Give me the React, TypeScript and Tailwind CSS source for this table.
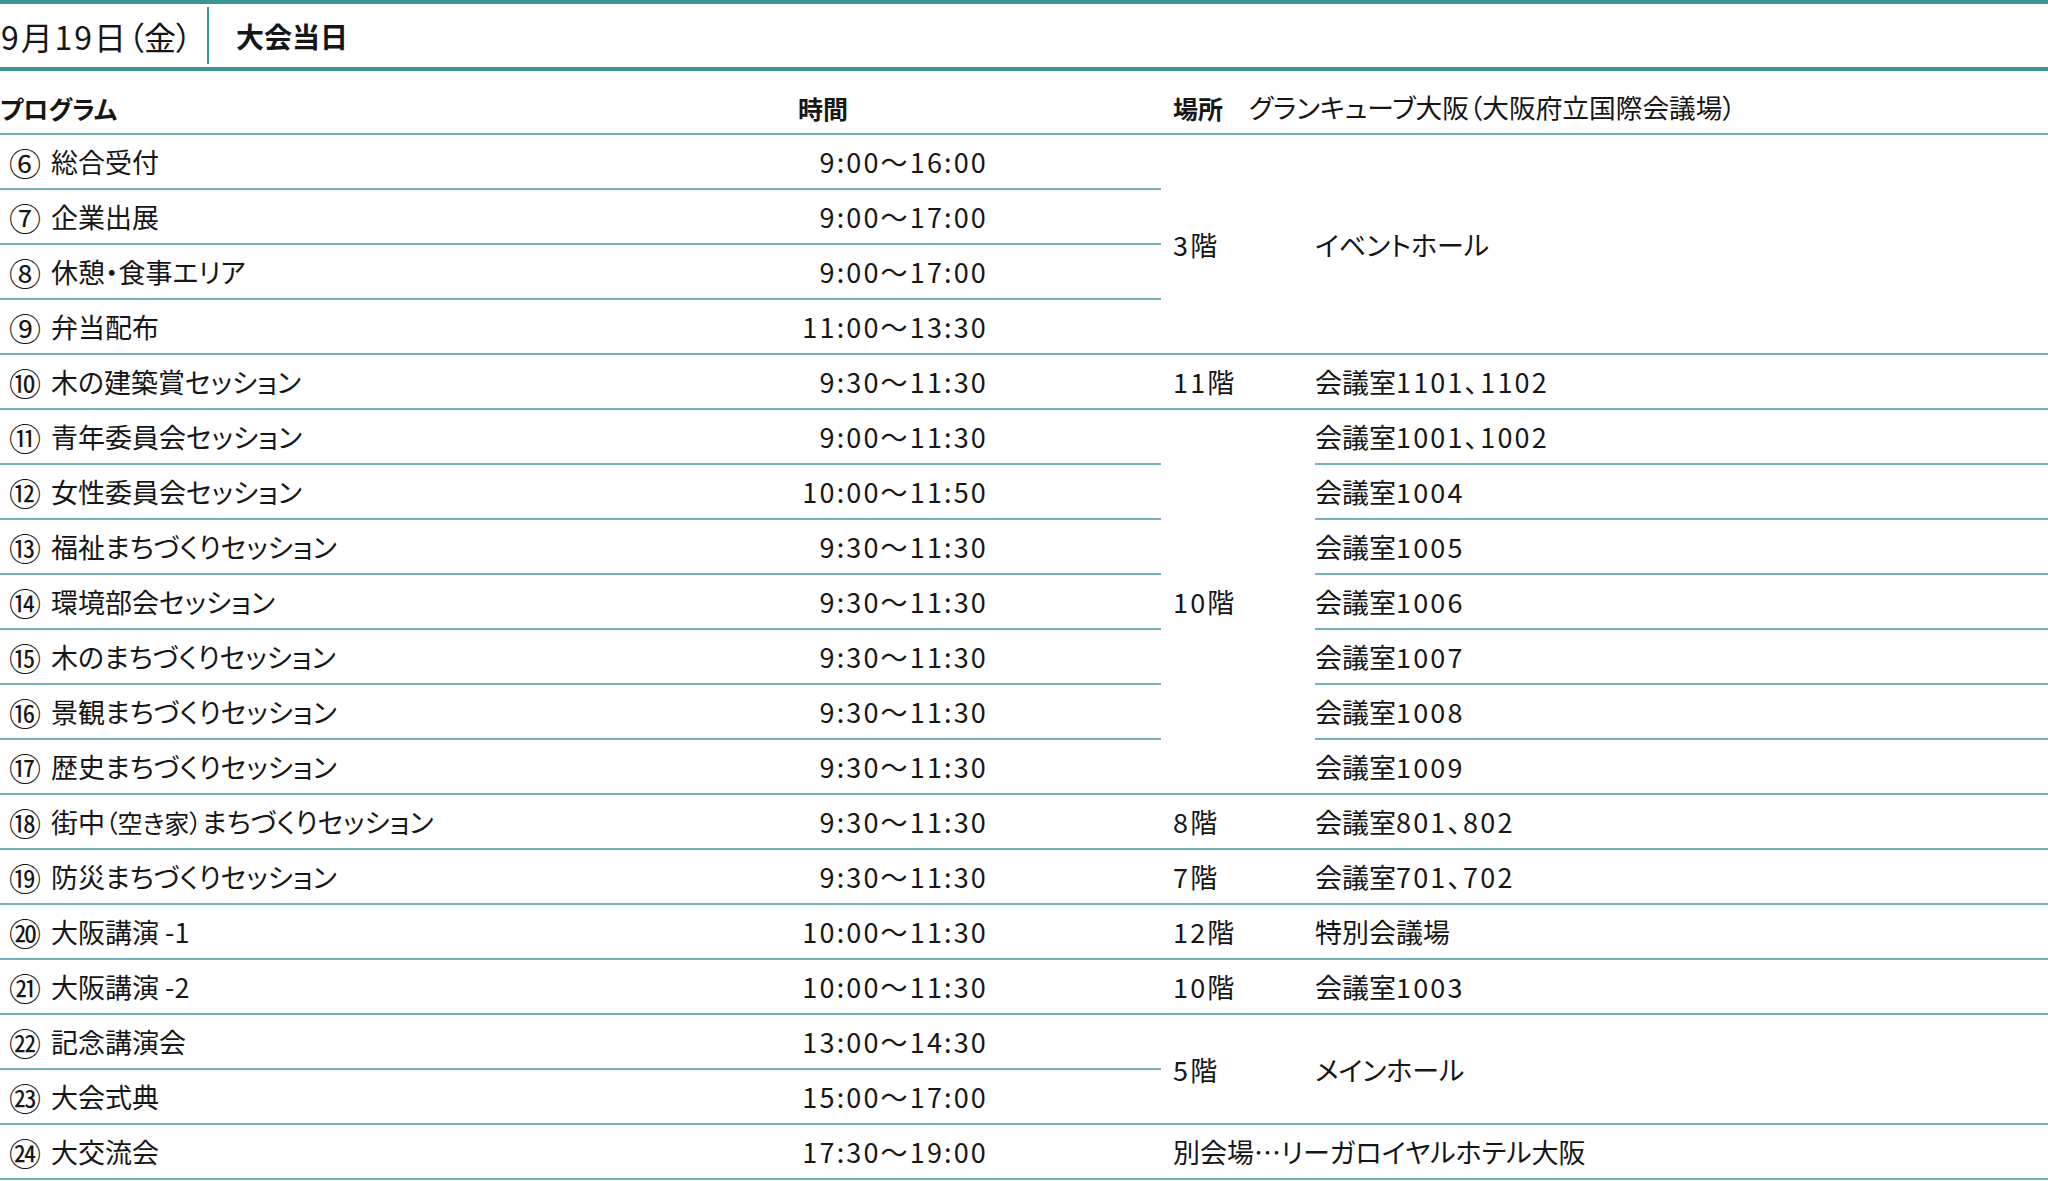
import React from 'react';

type Prog = { n: string; name: React.ReactNode; time: string };

const programs: Prog[] = [
  { n: '⑥', name: '総合受付', time: '9:00〜16:00' },
  { n: '⑦', name: '企業出展', time: '9:00〜17:00' },
  { n: '⑧', name: '休憩・食事エリア', time: '9:00〜17:00' },
  { n: '⑨', name: '弁当配布', time: '11:00〜13:30' },
  { n: '⑩', name: '木の建築賞セッション', time: '9:30〜11:30' },
  { n: '⑪', name: '青年委員会セッション', time: '9:00〜11:30' },
  { n: '⑫', name: '女性委員会セッション', time: '10:00〜11:50' },
  { n: '⑬', name: '福祉まちづくりセッション', time: '9:30〜11:30' },
  { n: '⑭', name: '環境部会セッション', time: '9:30〜11:30' },
  { n: '⑮', name: '木のまちづくりセッション', time: '9:30〜11:30' },
  { n: '⑯', name: '景観まちづくりセッション', time: '9:30〜11:30' },
  { n: '⑰', name: '歴史まちづくりセッション', time: '9:30〜11:30' },
  {
    n: '⑱',
    name: (
      <>
        街中<span className="text-[25px]">（空き家）</span>まちづくりセッション
      </>
    ),
    time: '9:30〜11:30',
  },
  { n: '⑲', name: '防災まちづくりセッション', time: '9:30〜11:30' },
  { n: '⑳', name: '大阪講演 -1', time: '10:00〜11:30' },
  { n: '㉑', name: '大阪講演 -2', time: '10:00〜11:30' },
  { n: '㉒', name: '記念講演会', time: '13:00〜14:30' },
  { n: '㉓', name: '大会式典', time: '15:00〜17:00' },
  { n: '㉔', name: '大交流会', time: '17:30〜19:00' },
];

const line = 'border-b-2 border-[#74b3b9]';

function Num({ children }: { children: React.ReactNode }) {
  return <span className="tracking-[0.08em]">{children}</span>;
}

function Floor({ num, span }: { num: string; span?: string }) {
  return (
    <div className={`${line} ${span ?? ''} col-start-3 flex items-center pl-[12px]`}>
      <Num>{num}</Num>階
    </div>
  );
}

function Room({ children, span }: { children: React.ReactNode; span?: string }) {
  return <div className={`${line} ${span ?? ''} col-start-4 flex items-center`}>{children}</div>;
}

function Kaigi({ no }: { no: string }) {
  return (
    <>
      会議室<Num>{no}</Num>
    </>
  );
}

function locationFor(i: number): React.ReactNode {
  switch (i) {
    case 0:
      return (
        <>
          <Floor num="3" span="row-span-4" />
          <Room span="row-span-4">イベントホール</Room>
        </>
      );
    case 4:
      return (
        <>
          <Floor num="11" />
          <Room>
            <Kaigi no="1101、1102" />
          </Room>
        </>
      );
    case 5:
      return (
        <>
          <Floor num="10" span="row-span-7" />
          <Room>
            <Kaigi no="1001、1002" />
          </Room>
        </>
      );
    case 6:
      return (
        <Room>
          <Kaigi no="1004" />
        </Room>
      );
    case 7:
      return (
        <Room>
          <Kaigi no="1005" />
        </Room>
      );
    case 8:
      return (
        <Room>
          <Kaigi no="1006" />
        </Room>
      );
    case 9:
      return (
        <Room>
          <Kaigi no="1007" />
        </Room>
      );
    case 10:
      return (
        <Room>
          <Kaigi no="1008" />
        </Room>
      );
    case 11:
      return (
        <Room>
          <Kaigi no="1009" />
        </Room>
      );
    case 12:
      return (
        <>
          <Floor num="8" />
          <Room>
            <Kaigi no="801、802" />
          </Room>
        </>
      );
    case 13:
      return (
        <>
          <Floor num="7" />
          <Room>
            <Kaigi no="701、702" />
          </Room>
        </>
      );
    case 14:
      return (
        <>
          <Floor num="12" />
          <Room>特別会議場</Room>
        </>
      );
    case 15:
      return (
        <>
          <Floor num="10" />
          <Room>
            <Kaigi no="1003" />
          </Room>
        </>
      );
    case 16:
      return (
        <>
          <Floor num="5" span="row-span-2" />
          <Room span="row-span-2">メインホール</Room>
        </>
      );
    case 18:
      return (
        <div className={`${line} col-start-3 col-span-2 flex items-center pl-[12px]`}>
          別会場…リーガロイヤルホテル大阪
        </div>
      );
    default:
      return null;
  }
}

export default function App() {
  return (
    <div className="w-[2048px] bg-white text-[#161616] font-['Noto_Sans_CJK_JP','Noto_Sans',sans-serif] [font-feature-settings:'palt'] leading-none">
      {/* Title bar */}
      <div className="h-[71px] border-t-4 border-b-4 border-[#3a9597] flex items-stretch">
        <div className="w-[207px] flex items-center text-[32px] tracking-[0.06em] pl-[1px]">
          9月19日<span className="tracking-normal">（金）</span>
        </div>
        <div className="w-[2px] my-[3px] bg-[#3a9597]" />
        <div className="flex items-center pl-[27px] text-[28px] font-bold">大会当日</div>
      </div>

      {/* Column header */}
      <div className={`grid grid-cols-[798px_363px_154px_1fr] h-[64px] ${line} text-[25px]`}>
        <div className="flex items-end pb-[12px] font-bold">プログラム</div>
        <div className="flex items-end pb-[12px] font-bold">時間</div>
        <div className="col-span-2 flex items-end pb-[12px] pl-[12px]">
          <span className="font-bold">場所</span>
          <span className="ml-[26px] text-[26.7px]">グランキューブ大阪（大阪府立国際会議場）</span>
        </div>
      </div>

      {/* Rows */}
      <div className="grid grid-cols-[798px_363px_154px_1fr] auto-rows-[55px] text-[27px]">
        {programs.map((p, i) => (
          <React.Fragment key={i}>
            <div className={`${line} col-start-1 flex items-center`}>
              <span className="w-[51px] pl-[9px] text-[32px] leading-none">{p.n}</span>
              <span>{p.name}</span>
            </div>
            <div className={`${line} col-start-2 flex items-center`}>
              <span className="w-[190px] text-right tracking-[0.08em]">{p.time}</span>
            </div>
            {locationFor(i)}
          </React.Fragment>
        ))}
      </div>
    </div>
  );
}
